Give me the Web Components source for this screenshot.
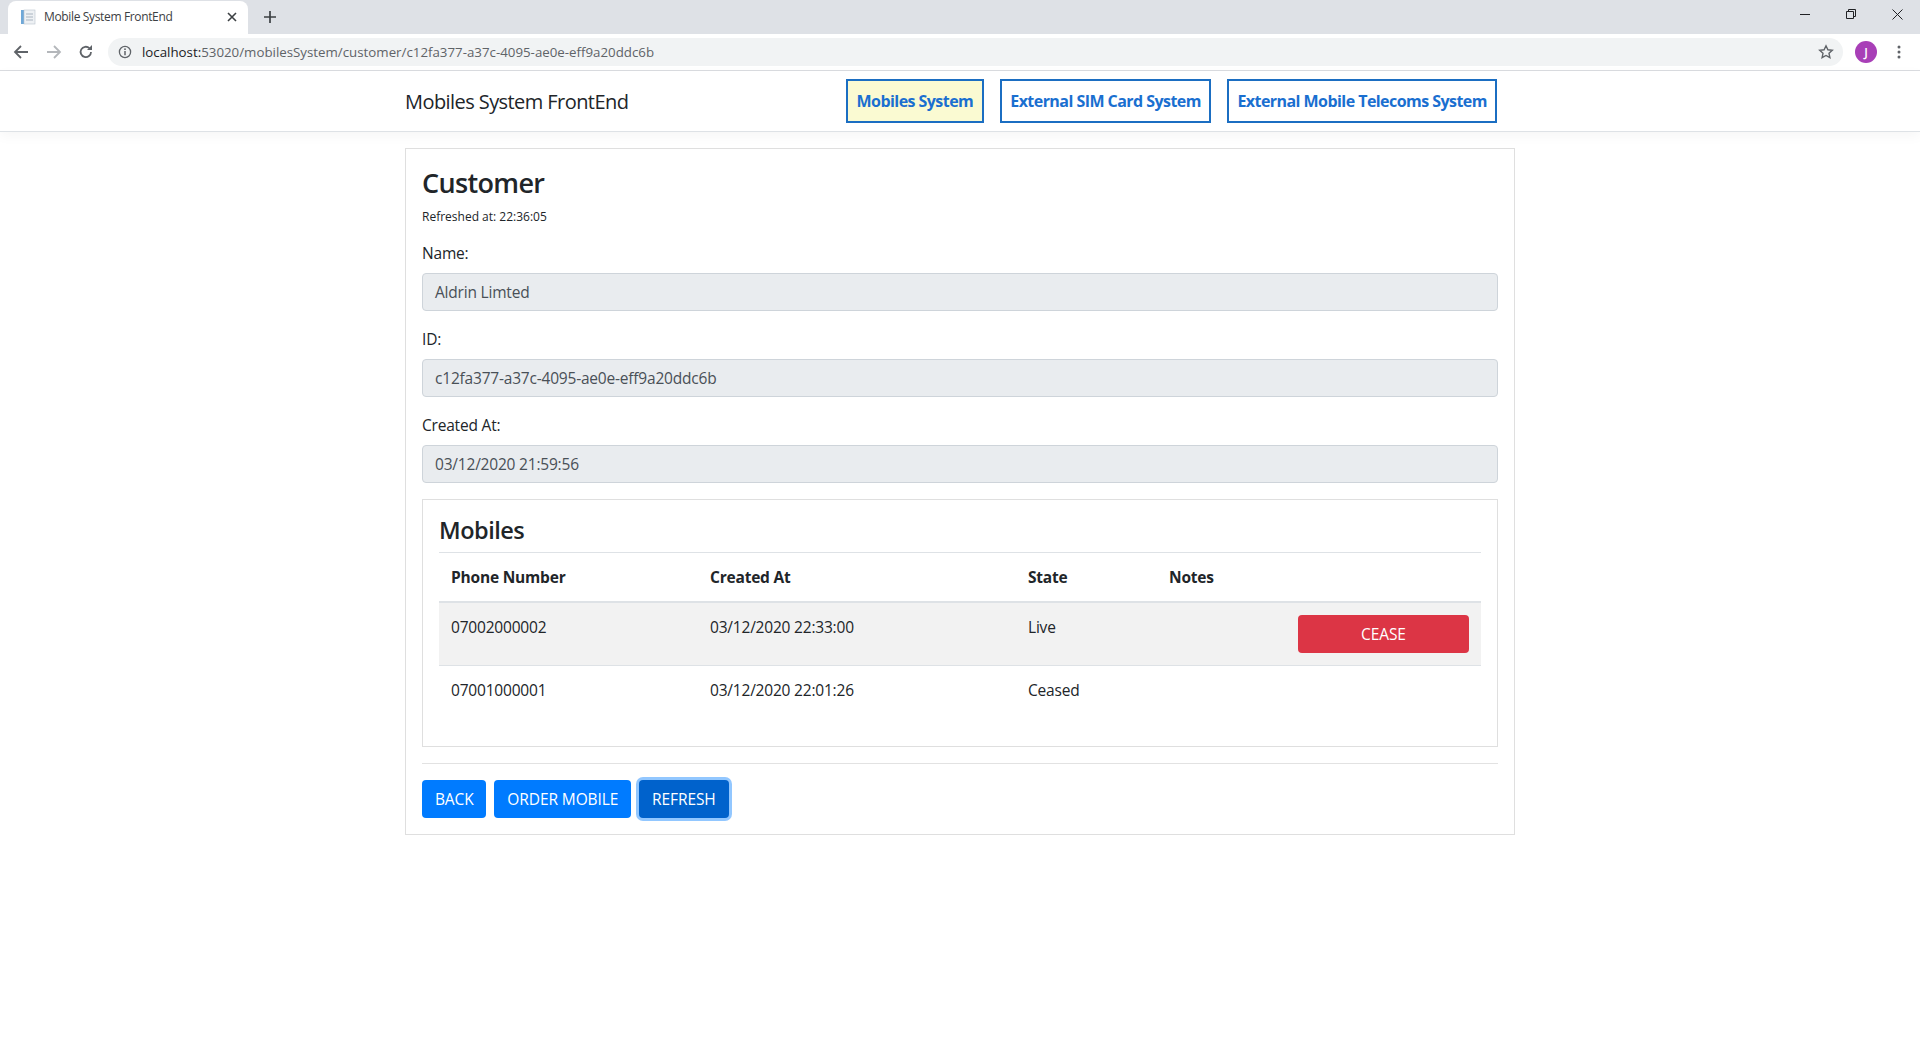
<!DOCTYPE html>
<html>
<head>
<meta charset="utf-8">
<title>Mobile System FrontEnd</title>
<style>
  html, body { margin: 0; background: #fff; }
  body { font-family: "Open Sans", "Noto Sans", sans-serif; font-size: 16px; color: #212529; }
</style>
</head>
<body>
<browser-chrome></browser-chrome>
<app-navbar></app-navbar>
<page-container>
  <app-card>
    <card-title>Customer</card-title>
    <small-note>Refreshed at: 22:36:05</small-note>
    <form-field label="Name:" value="Aldrin Limted"></form-field>
    <form-field label="ID:" value="c12fa377-a37c-4095-ae0e-eff9a20ddc6b"></form-field>
    <form-field label="Created At:" value="03/12/2020 21:59:56"></form-field>
    <mobiles-panel></mobiles-panel>
    <button-bar>
      <app-button>BACK</app-button>
      <app-button>ORDER MOBILE</app-button>
      <app-button focused>REFRESH</app-button>
    </button-bar>
  </app-card>
</page-container>

<script>
class BrowserChrome extends HTMLElement {
  constructor() {
    super();
    this.attachShadow({ mode: "open" }).innerHTML = `
      <style>
        :host { display: block; font-family: "Open Sans", sans-serif; }
        .strip { height: 34px; background: #dee1e6; display: flex; align-items: flex-end; }
        .tab { width: 240px; height: 33px; margin-left: 8px; background: #fff; border-radius: 8px 8px 0 0; display: flex; align-items: center; box-sizing: border-box; padding: 0 10px 2px 12px; font-size: 12px; letter-spacing: -.35px; color: #3c4043; gap: 8px; }
        .tab span { flex: 1; white-space: nowrap; }
        .plus { margin: 0 0 1px 15px; height: 33px; display: flex; align-items: center; }
        .win { margin-left: auto; height: 34px; display: flex; align-items: center; }
        .win svg { display: block; }
        .win div { width: 46px; display: flex; justify-content: center; padding-bottom: 6px; }
        .bar { height: 36px; background: #fff; border-bottom: 1px solid #dadce0; display: flex; align-items: center; }
        .nav { display: flex; align-items: center; width: 108px; flex: none; padding-left: 13px; box-sizing: border-box; gap: 16.5px; }
        .nav svg { display: block; }
        .url { flex: 1; height: 28px; background: #f1f3f4; border-radius: 14px; display: flex; align-items: center; padding: 0 9px 0 10px; font-size: 13.3px; color: #5f6368; white-space: nowrap; gap: 10px; margin-right: 12px; }
        .url b { font-weight: 400; color: #202124; }
        .url .star { margin-left: auto; }
        .avatar { width: 22px; height: 22px; border-radius: 50%; background: #a83fb7; color: #fff; font-size: 12px; font-weight: 600; display: flex; align-items: center; justify-content: center; flex: none; }
        .dots { width: 43px; display: flex; justify-content: center; flex: none; }
      </style>
      <div class="strip">
        <div class="tab">
          <svg width="16" height="16" viewBox="0 0 16 16"><rect x="1" y="1" width="3" height="14" fill="#6fa8d8"/><rect x="4" y="1" width="11" height="14" fill="#eef1f4" stroke="#b9c2cc" stroke-width=".6"/><path d="M6 5h7M6 8h7M6 11h7" stroke="#a9b4c0"/></svg>
          <span>Mobile System FrontEnd</span>
          <svg width="12" height="12" viewBox="0 0 12 12"><path d="M2 2l8 8M10 2l-8 8" stroke="#3c4043" stroke-width="1.6"/></svg>
        </div>
        <div class="plus"><svg width="14" height="14" viewBox="0 0 14 14"><path d="M7 1v12M1 7h12" stroke="#3c4043" stroke-width="1.7"/></svg></div>
        <div class="win">
          <div><svg width="10" height="10" viewBox="0 0 10 10"><path d="M0 5.5h10" stroke="#202124"/></svg></div>
          <div><svg width="10" height="10" viewBox="0 0 10 10"><path d="M.5 2.5h7v7h-7zM2.5 2.5v-2h7v7h-2" fill="none" stroke="#202124"/></svg></div>
          <div><svg width="11" height="11" viewBox="0 0 11 11"><path d="M.5.5l10 10M10.5.5l-10 10" stroke="#202124"/></svg></div>
        </div>
      </div>
      <div class="bar">
        <div class="nav">
          <svg width="16" height="16" viewBox="0 0 16 16"><path d="M15 8H2M8 2L2 8l6 6" fill="none" stroke="#5f6368" stroke-width="1.8"/></svg>
          <svg width="16" height="16" viewBox="0 0 16 16"><path d="M1 8h13M8 2l6 6-6 6" fill="none" stroke="#b4b7bb" stroke-width="1.8"/></svg>
          <svg width="16" height="16" viewBox="0 0 16 16"><path d="M13 8a5.2 5.2 0 1 1-1.6-3.8" fill="none" stroke="#5f6368" stroke-width="1.8"/><path d="M14 1v5H9z" fill="#5f6368"/></svg>
        </div>
        <div class="url">
          <svg width="14" height="14" viewBox="0 0 14 14"><circle cx="7" cy="7" r="5.6" fill="none" stroke="#5f6368" stroke-width="1.3"/><path d="M7 6v4.2" stroke="#5f6368" stroke-width="1.5"/><circle cx="7" cy="4.2" r=".9" fill="#5f6368"/></svg>
          <span><b>localhost:</b>53020/mobilesSystem/customer/c12fa377-a37c-4095-ae0e-eff9a20ddc6b</span>
          <svg class="star" width="16" height="16" viewBox="0 0 16 16"><path d="M8 1.8l1.9 4 4.4.5-3.3 3 .9 4.4L8 11.5l-3.9 2.2.9-4.4-3.3-3 4.4-.5z" fill="none" stroke="#5f6368" stroke-width="1.4"/></svg>
        </div>
        <div class="avatar">J</div>
        <div class="dots"><svg width="4" height="14" viewBox="0 0 4 14"><circle cx="2" cy="2" r="1.5" fill="#5f6368"/><circle cx="2" cy="7" r="1.5" fill="#5f6368"/><circle cx="2" cy="12" r="1.5" fill="#5f6368"/></svg></div>
      </div>`;
  }
}

class AppNavbar extends HTMLElement {
  constructor() {
    super();
    this.attachShadow({ mode: "open" }).innerHTML = `
      <style>
        :host { display: block; height: 61px; box-sizing: border-box; background: #fff; border-bottom: 1px solid #dee2e6; box-shadow: 0 4px 12px rgba(0,0,0,.04); }
        .inner { width: 1110px; margin: 0 auto; height: 60px; display: flex; align-items: center; }
        .brand { font-size: 20px; color: #212529; width: 441px; white-space: nowrap; letter-spacing: -.57px; padding-top: 1px; }
        .links { display: flex; gap: 16px; }
        a { display: block; box-sizing: border-box; height: 44px; line-height: 40px; border: 2px solid #1b6ec2; padding: 0 8.5px; font-size: 16px; font-weight: 700; color: #1a6fd0; white-space: nowrap; letter-spacing: -.55px; }
        a.on { background: #fafad2; }
        a:last-child { padding: 0 8px; }
      </style>
      <div class="inner">
        <div class="brand">Mobiles System FrontEnd</div>
        <div class="links">
          <a class="on">Mobiles System</a>
          <a>External SIM Card System</a>
          <a>External Mobile Telecoms System</a>
        </div>
      </div>`;
  }
}

class PageContainer extends HTMLElement {
  constructor() {
    super();
    this.attachShadow({ mode: "open" }).innerHTML = `
      <style>:host { display: block; width: 1110px; margin: 16px auto 0; }</style>
      <slot></slot>`;
  }
}

class AppCard extends HTMLElement {
  constructor() {
    super();
    this.attachShadow({ mode: "open" }).innerHTML = `
      <style>:host { display: block; border: 1px solid #dfdfdf; padding: 16px; }</style>
      <slot></slot>`;
  }
}

class CardTitle extends HTMLElement {
  constructor() {
    super();
    this.attachShadow({ mode: "open" }).innerHTML = `
      <style>:host { display: block; font-size: 27px; font-weight: 600; line-height: 36px; letter-spacing: -.65px; color: #212529; }</style>
      <slot></slot>`;
  }
}

class SmallNote extends HTMLElement {
  constructor() {
    super();
    this.attachShadow({ mode: "open" }).innerHTML = `
      <style>:host { display: block; font-size: 12px; line-height: 20px; margin: 6px 0 14px; }</style>
      <slot></slot>`;
  }
}

class FormField extends HTMLElement {
  constructor() {
    super();
    this.attachShadow({ mode: "open" }).innerHTML = `
      <style>
        :host { display: block; margin-bottom: 16px; }
        label { display: block; line-height: 24px; margin-bottom: 8px; font-size: 15.5px; letter-spacing: -.2px; }
        .input { box-sizing: border-box; height: 38px; background: #e9ecef; border: 1px solid #ced4da; border-radius: 4px; padding: 0 12px; line-height: 36px; color: #495057; font-size: 15.5px; letter-spacing: -.2px; }
      </style>
      <label></label>
      <div class="input"></div>`;
    this.shadowRoot.querySelector("label").textContent = this.getAttribute("label");
    this.shadowRoot.querySelector(".input").textContent = this.getAttribute("value");
  }
}

class MobilesPanel extends HTMLElement {
  constructor() {
    super();
    this.attachShadow({ mode: "open" }).innerHTML = `
      <style>
        :host { display: block; border: 1px solid #dfdfdf; padding: 16px 16px 0; height: 248px; box-sizing: border-box; font-size: 15.5px; letter-spacing: -.2px; }
        h3 { margin: 0; font-size: 23.5px; font-weight: 600; line-height: 29px; letter-spacing: -.5px; padding-bottom: 7px; border-bottom: 1px solid #dee2e6; }
        .row { display: grid; grid-template-columns: 259px 318px 141px 1fr; padding: 0 12px; box-sizing: border-box; }
        .head { height: 50px; align-items: center; font-weight: 700; border-bottom: 2px solid #dee2e6; }
        .body { height: 63px; border-bottom: 1px solid #dee2e6; padding-top: 12px; line-height: 24px; }
        .live { background: #f2f2f2; }
        .last { border-bottom: 0; }
        .act { display: flex; justify-content: flex-end; }
      </style>
      <h3>Mobiles</h3>
      <div class="row head"><div>Phone Number</div><div>Created At</div><div>State</div><div>Notes</div></div>
      <div class="row body live"><div>07002000002</div><div>03/12/2020 22:33:00</div><div>Live</div><div class="act"><app-button danger>CEASE</app-button></div></div>
      <div class="row body last"><div>07001000001</div><div>03/12/2020 22:01:26</div><div>Ceased</div><div></div></div>`;
  }
}

class ButtonBar extends HTMLElement {
  constructor() {
    super();
    this.attachShadow({ mode: "open" }).innerHTML = `
      <style>:host { display: flex; gap: 8px; border-top: 1px solid #e2e2e2; margin-top: 16px; padding-top: 16px; }</style>
      <slot></slot>`;
  }
}

class AppButton extends HTMLElement {
  constructor() {
    super();
    this.attachShadow({ mode: "open" }).innerHTML = `
      <style>
        :host { display: inline-block; box-sizing: border-box; height: 38px; line-height: 38px; padding: 0 12.9px; background: #007bff; color: #fff; border-radius: 4px; font-size: 15.5px; letter-spacing: -.1px; white-space: nowrap; }
        :host([focused]) { background: #0062cc; box-shadow: 0 0 0 3px rgba(38,143,255,.5); }
        :host([danger]) { background: #dc3545; width: 171px; text-align: center; padding: 0; }
      </style>
      <slot></slot>`;
  }
}

customElements.define("browser-chrome", BrowserChrome);
customElements.define("app-navbar", AppNavbar);
customElements.define("page-container", PageContainer);
customElements.define("app-card", AppCard);
customElements.define("card-title", CardTitle);
customElements.define("small-note", SmallNote);
customElements.define("form-field", FormField);
customElements.define("mobiles-panel", MobilesPanel);
customElements.define("button-bar", ButtonBar);
customElements.define("app-button", AppButton);
</script>
</body>
</html>
